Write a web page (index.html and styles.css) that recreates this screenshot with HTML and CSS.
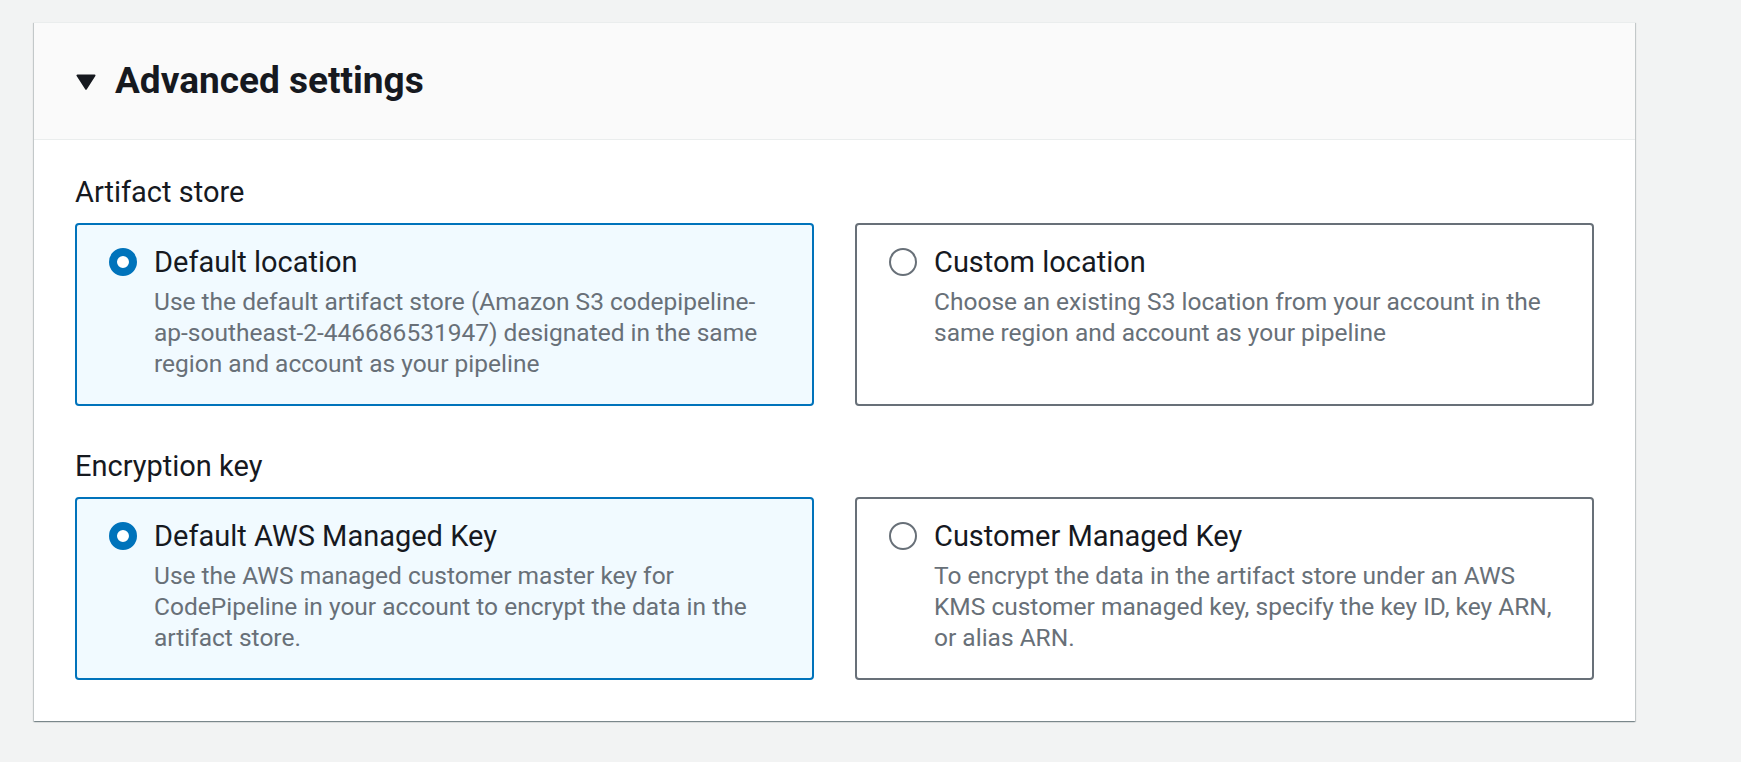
FILE: index.html
```html
<!DOCTYPE html>
<html lang="en">
<head>
<meta charset="utf-8">
<title>Advanced settings</title>
<link rel="stylesheet" href="styles.css">
</head>
<body>
<div class="page">
  <section class="panel">
    <header class="panel-header">
      <svg class="caret" width="20" height="16" viewBox="0 0 20 16" aria-hidden="true">
        <path d="M1.5 1.5 H18.5 L10 14.8 Z" fill="#16191f" stroke="#16191f" stroke-width="2" stroke-linejoin="round"/>
      </svg>
      <h2 class="panel-title">Advanced settings</h2>
    </header>
    <div class="panel-body">
      <div class="field">
        <div class="field-label">Artifact store</div>
        <div class="tiles">
          <label class="tile tile-selected">
            <span class="radio radio-checked"></span>
            <span class="tile-text">
              <span class="tile-label">Default location</span>
              <span class="tile-desc">Use the default artifact store (Amazon S3 codepipeline-ap-southeast-2-446686531947) designated in the same region and account as your pipeline</span>
            </span>
          </label>
          <label class="tile">
            <span class="radio"></span>
            <span class="tile-text">
              <span class="tile-label">Custom location</span>
              <span class="tile-desc">Choose an existing S3 location from your account in the same region and account as your pipeline</span>
            </span>
          </label>
        </div>
      </div>
      <div class="field">
        <div class="field-label">Encryption key</div>
        <div class="tiles">
          <label class="tile tile-selected">
            <span class="radio radio-checked"></span>
            <span class="tile-text">
              <span class="tile-label">Default AWS Managed Key</span>
              <span class="tile-desc">Use the AWS managed customer master key for CodePipeline in your account to encrypt the data in the artifact store.</span>
            </span>
          </label>
          <label class="tile">
            <span class="radio"></span>
            <span class="tile-text">
              <span class="tile-label">Customer Managed Key</span>
              <span class="tile-desc">To encrypt the data in the artifact store under an AWS KMS customer managed key, specify the key ID, key ARN, or alias ARN.</span>
            </span>
          </label>
        </div>
      </div>
    </div>
  </section>
</div>
</body>
</html>
```
FILE: styles.css
```css
* { box-sizing: border-box; }
html, body {
  margin: 0;
  padding: 0;
  background: #f2f3f3;
  font-family: Roboto, "Open Sans", "Liberation Sans", sans-serif;
  color: #16191f;
}
.page {
  padding: 22px 106px 0 34px;
  height: 762px;
  overflow: hidden;
}
.panel {
  width: 1601px;
  background: #ffffff;
  border-top: 1px solid #eaeded;
  box-shadow: 0 1px 1px 0 rgba(0, 28, 36, 0.3), 1px 1px 1px 0 rgba(0, 28, 36, 0.15), -1px 1px 1px 0 rgba(0, 28, 36, 0.15);
}
.panel-header {
  display: flex;
  align-items: center;
  gap: 19px;
  height: 117px;
  padding: 0 0 0 42px;
  background: #fafafa;
  border-bottom: 1px solid #eaeded;
}
.caret {
  display: block;
  flex: none;
  margin-top: 1px;
}
.panel-title {
  margin: 0;
  font-size: 37px;
  line-height: 44px;
  font-weight: 700;
  color: #16191f;
}
.panel-body {
  display: flex;
  flex-direction: column;
  gap: 44px;
  padding: 36px 41px 41px 41px;
}
.field {
  display: flex;
  flex-direction: column;
  gap: 15px;
}
.field-label {
  font-size: 29px;
  line-height: 32px;
  color: #16191f;
}
.tiles {
  display: grid;
  grid-template-columns: 1fr 1fr;
  column-gap: 41px;
}
.tile {
  display: flex;
  align-items: flex-start;
  gap: 17px;
  height: 183px;
  padding: 23px 28px 0 32px;
  border: 2px solid #687078;
  border-radius: 4px;
  background: #ffffff;
}
.tile-selected {
  border-color: #0073bb;
  background: #f1faff;
}
.radio {
  flex: none;
  width: 28px;
  height: 28px;
  border-radius: 50%;
  border: 2px solid #687078;
  background: #ffffff;
}
.radio-checked {
  border: 8px solid #0073bb;
  background: #ffffff;
}
.tile-text {
  display: flex;
  flex-direction: column;
  min-width: 0;
}
.tile-label {
  font-size: 29px;
  line-height: 28px;
  color: #16191f;
}
.tile-desc {
  margin-top: 10px;
  font-size: 24.5px;
  line-height: 31.2px;
  color: #687078;
}
```
